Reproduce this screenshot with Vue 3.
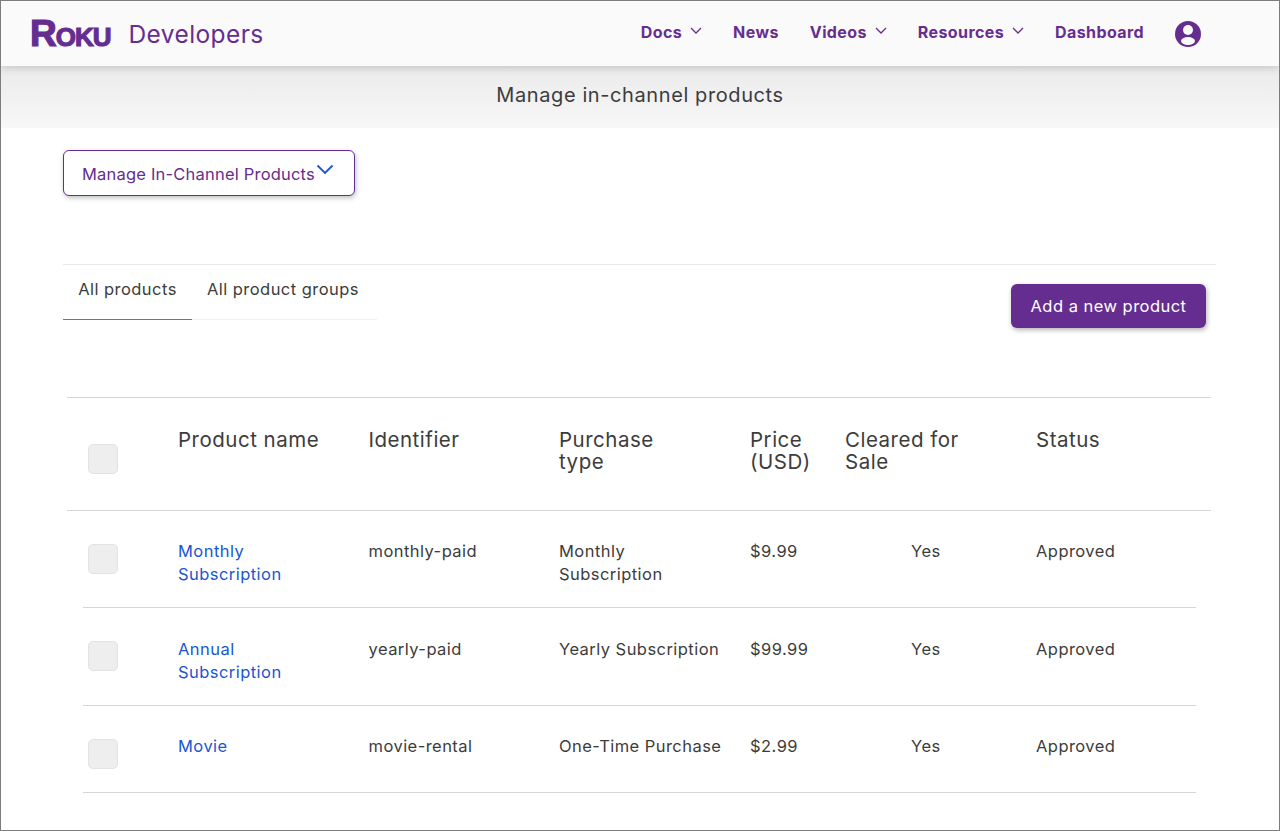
<template>
  <div class="page">
    <header class="topbar">
      <div class="brand">
        <span class="logo">Roku</span>
        <span class="brand-name">Developers</span>
      </div>
      <nav class="nav">
        <a v-for="item in navItems" :key="item.label" class="nav-item">
          {{ item.label }}
          <svg v-if="item.menu" class="nav-caret" width="12" height="7" viewBox="0 0 12 7" fill="none" stroke="currentColor" stroke-width="1.3">
            <polyline points="1 1 6 6 11 1" />
          </svg>
        </a>
        <svg class="avatar" width="26" height="26" viewBox="0 0 26 26">
          <circle cx="13" cy="13" r="13" fill="#662d91" />
          <circle cx="13" cy="9" r="5" fill="#fafafa" />
          <ellipse cx="13" cy="20" rx="7" ry="4" fill="#fafafa" />
        </svg>
      </nav>
    </header>

    <div class="subheader">Manage in-channel products</div>

    <main class="content">
      <button class="select-btn">
        Manage In-Channel Products
        <svg width="18" height="11" viewBox="0 0 18 11" fill="none" stroke="#1a56d2" stroke-width="1.8">
          <polyline points="1.500 1.500 9 9 16.500 1.500" />
        </svg>
      </button>

      <div class="toolbar">
        <div class="tabs">
          <button class="tab active">All products</button>
          <button class="tab">All product groups</button>
        </div>
        <button class="add-btn">Add a new product</button>
      </div>

      <section class="table">
        <div class="head-row">
          <div class="cell check-cell"><span class="checkbox"></span></div>
          <div v-for="col in columns" :key="col" class="cell head-cell">{{ col }}</div>
        </div>
        <div v-for="p in products" :key="p.id" class="row">
          <div class="cell check-cell"><span class="checkbox"></span></div>
          <div class="cell"><a class="product-link" v-html="p.name"></a></div>
          <div class="cell">{{ p.id }}</div>
          <div class="cell" v-html="p.type"></div>
          <div class="cell">{{ p.price }}</div>
          <div class="cell cleared">Yes</div>
          <div class="cell">Approved</div>
        </div>
      </section>
    </main>
  </div>
</template>

<script setup>
const navItems = [
  { label: 'Docs', menu: true },
  { label: 'News', menu: false },
  { label: 'Videos', menu: true },
  { label: 'Resources', menu: true },
  { label: 'Dashboard', menu: false }
]

const columns = ['Product name', 'Identifier', 'Purchase type', 'Price (USD)', 'Cleared for Sale', 'Status']

const products = [
  { id: 'monthly-paid', name: 'Monthly<br>Subscription', type: 'Monthly<br>Subscription', price: '$9.99' },
  { id: 'yearly-paid', name: 'Annual<br>Subscription', type: 'Yearly Subscription', price: '$99.99' },
  { id: 'movie-rental', name: 'Movie', type: 'One-Time Purchase', price: '$2.99' }
]
</script>

<style>
html, body {
  margin: 0;
  background: #fff;
}
</style>

<style scoped>
.page {
  box-sizing: border-box;
  height: 831px;
  overflow: hidden;
  border: 1px solid #7d7d7d;
  background: #fff;
  font-family: Inter, "Open Sans", sans-serif;
  color: #3c3c3c;
}

.topbar {
  position: relative;
  display: flex;
  justify-content: space-between;
  align-items: center;
  height: 65px;
  padding: 0 78px 0 29px;
  background: #fafafa;
  box-shadow: 0 2px 8px rgba(0, 0, 0, 0.16);
}

.brand {
  display: flex;
  align-items: center;
  gap: 18px;
}

.logo {
  font-family: "Liberation Sans", sans-serif;
  font-size: 37px;
  font-weight: 700;
  font-variant: small-caps;
  letter-spacing: -1px;
  color: #662d91;
  -webkit-text-stroke: 1.2px #662d91;
}

.brand-name {
  margin-top: 1px;
  font-size: 24.500px;
  letter-spacing: 0.4px;
  color: #662d91;
}

.nav {
  display: flex;
  align-items: center;
}

.nav-item {
  display: flex;
  align-items: center;
  gap: 8px;
  margin: 0 31px 4px 0;
  font-size: 16px;
  font-weight: 700;
  letter-spacing: 0.4px;
  color: #662d91;
}

.nav-caret {
  margin-top: -3px;
}

.avatar {
  display: block;
}

.subheader {
  height: 62px;
  line-height: 58px;
  text-align: center;
  font-size: 20px;
  letter-spacing: 0.6px;
  background: linear-gradient(#ebebeb, #f7f7f7);
}

.content {
  padding: 22px 63px 0 62px;
}

.select-btn {
  display: flex;
  align-items: flex-start;
  gap: 1px;
  box-sizing: border-box;
  width: 292px;
  height: 46px;
  padding: 13px 0 0 18px;
  border: 1px solid #662d91;
  border-radius: 6px;
  background: #fff;
  box-shadow: 1px 2px 5px rgba(0, 0, 0, 0.25);
  font-family: inherit;
  font-size: 16.500px;
  letter-spacing: 0.2px;
  color: #662d91;
}

.toolbar {
  display: flex;
  justify-content: space-between;
  margin-top: 68px;
  padding-right: 10px;
  border-top: 1px solid #e8e8e8;
}

.tabs {
  display: flex;
  width: 314px;
  height: 54px;
  border-bottom: 1px solid #f2f2f2;
}

.tab {
  height: 55px;
  padding: 0 15px 7px;
  border: 0;
  background: none;
  font-family: inherit;
  font-size: 16.500px;
  letter-spacing: 0.45px;
  color: #3c3c3c;
}

.tab.active {
  width: 129px;
  border-bottom: 1px solid #3f82d0;
}

.add-btn {
  width: 195px;
  height: 44px;
  margin-top: 19px;
  border: 0;
  border-radius: 6px;
  background: #662d91;
  box-shadow: 1px 2px 5px rgba(0, 0, 0, 0.3);
  font-family: inherit;
  font-size: 16.500px;
  letter-spacing: 0.47px;
  color: #fff;
}

.table {
  margin: 69px 5px 0 4px;
  border-top: 1px solid #d6d6d6;
}

.head-row,
.row {
  display: grid;
  grid-template-columns: 95px 190.500px 190.500px 191px 95px 191px 1fr;
}

.head-row {
  height: 112px;
  padding: 0 15px 0 16px;
  border-bottom: 1px solid #d6d6d6;
  font-size: 20.500px;
  line-height: 22px;
  letter-spacing: 0.5px;
}

.head-row .cell {
  padding-top: 31px;
}

.head-row .head-cell {
  padding-right: 45px;
}

.head-row .check-cell {
  padding-top: 46px;
}

.row {
  margin: 0 15px 0 16px;
  height: 96px;
  border-bottom: 1px solid #d6d6d6;
  font-size: 16.500px;
  line-height: 22.500px;
  letter-spacing: 0.45px;
}

.row:nth-child(3) {
  height: 97px;
}

.row:nth-child(4) {
  height: 86px;
}

.row .cell {
  padding-top: 29px;
}

.row:nth-child(3) .cell {
  padding-top: 30px;
}

.row .check-cell,
.row:nth-child(3) .check-cell {
  padding-top: 33px;
}

.cell {
  padding-right: 14px;
}

.check-cell {
  padding-left: 5px;
}

.checkbox {
  display: block;
  box-sizing: border-box;
  width: 30px;
  height: 30px;
  border: 1px solid #e2e2e2;
  border-radius: 5px;
  background: #eeeeee;
}

.product-link {
  color: #1a56d2;
}

.cleared {
  padding-left: 66px;
}
</style>
